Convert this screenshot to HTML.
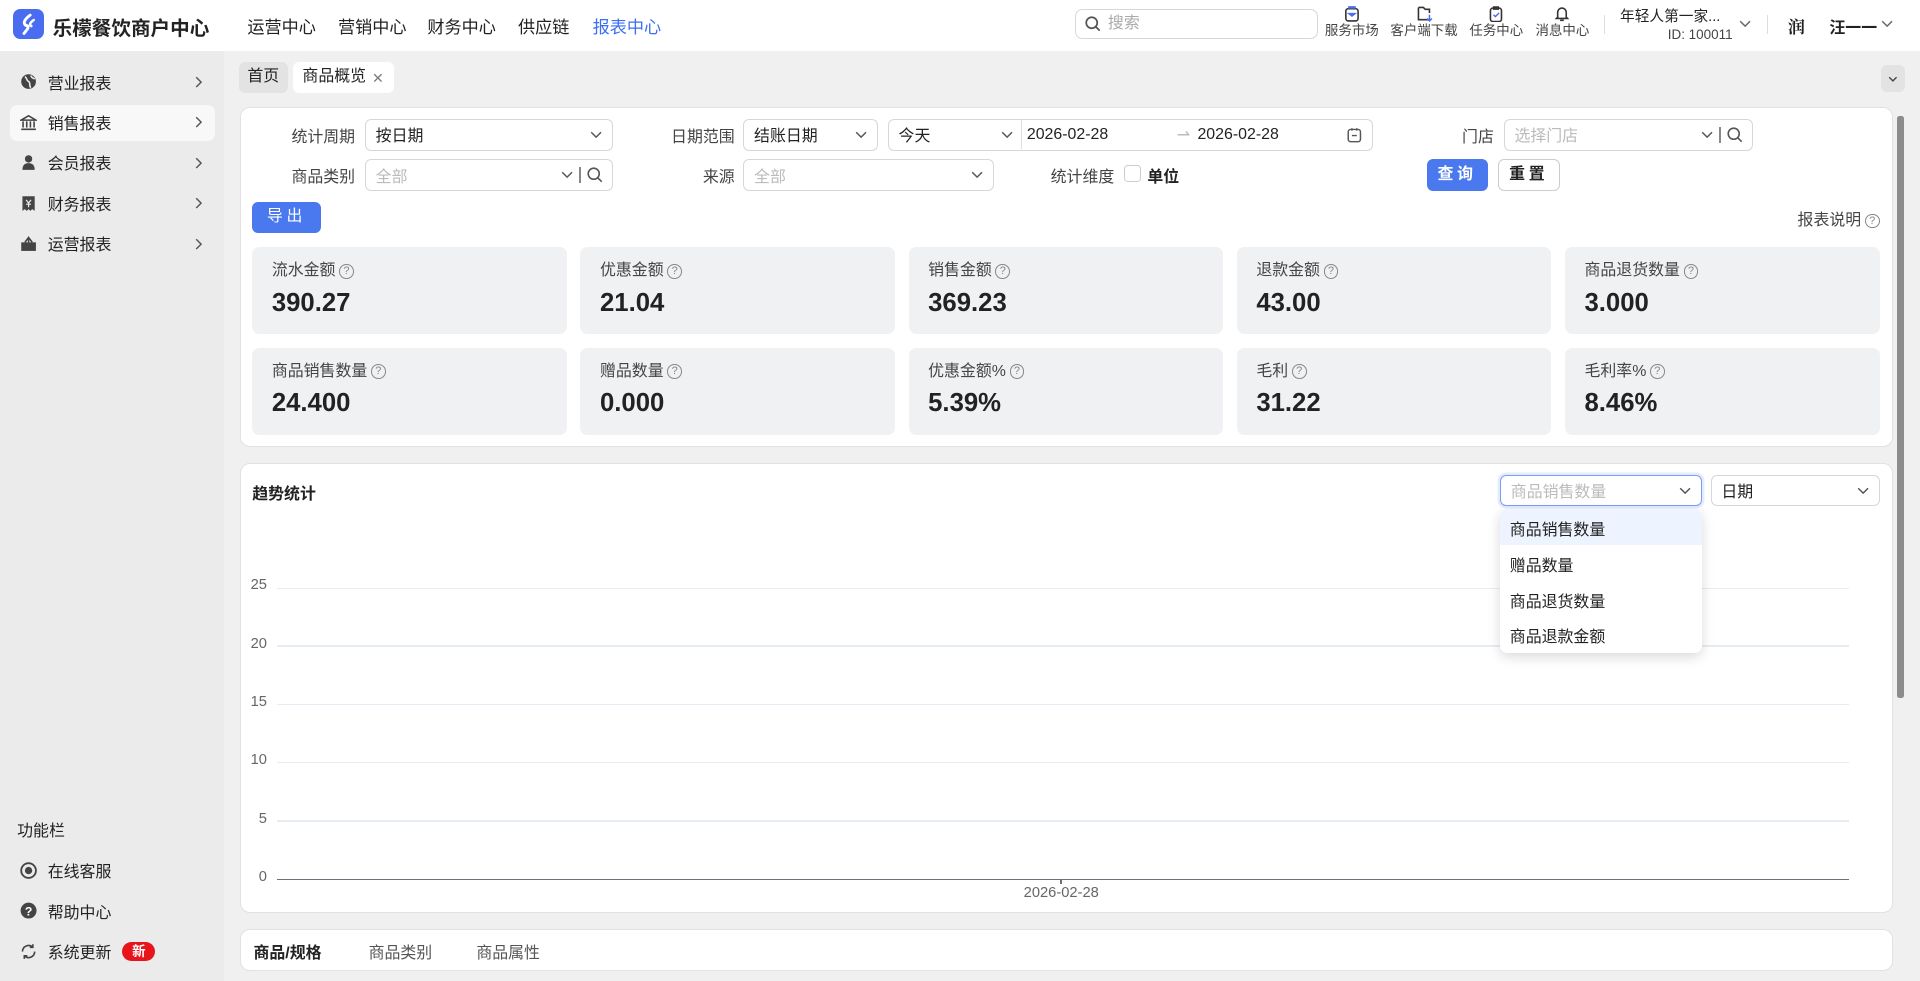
<!DOCTYPE html>
<html><head><meta charset="utf-8">
<style>
html{zoom:1.22449}
*{box-sizing:border-box;margin:0;padding:0}
body{width:1568px;height:801px;overflow:hidden;background:#f0f0f0;font-family:"Liberation Sans","Noto Sans CJK SC",sans-serif;font-size:13px;color:#222;position:relative}
.a{position:absolute}
.hdr{left:0;top:0;width:1568px;height:42px;background:#fff}
.nav{top:11px;font-size:14px;color:#222}
.side{left:0;top:42px;width:183px;height:759px;background:#ebebeb}
.si{left:16px;font-size:13px;color:#222;display:flex;align-items:center;gap:9px;height:18px}
.si svg{flex:none}
.chev{left:159px}
.panel{background:#fff;border:1px solid #e2e2e2;border-radius:8px}
.lbl{font-size:13px;color:#444;text-align:right}
.sel{height:26px;border:1px solid #d7d7d7;border-radius:5px;background:#fff;font-size:13px;padding:0 8px;display:flex;align-items:center}
.ph{color:#bbb}
.card{background:#f0f1f3;border-radius:6px;width:257px;height:71px}
.card .t{position:absolute;left:16px;top:8px;font-size:13px;color:#444}
.card .v{position:absolute;left:16px;top:34px;font-size:21px;font-weight:bold;color:#222}
.q{display:inline-block;width:12px;height:12px;border:1px solid #888;border-radius:50%;font-size:9px;line-height:10px;text-align:center;color:#888;vertical-align:1px;margin-left:3px}
.grid{left:226px;width:1284px;height:1px;background:#e6ecf4}
.yl{left:196px;width:22px;text-align:right;font-size:12px;color:#666}
.dd{font-size:13px;color:#222;left:1233px}
.hi{top:3px;font-size:11px;color:#444;text-align:center;line-height:14px}
</style></head><body>
<div class="a hdr"></div>
<div class="a" style="left:11px;top:7px;width:25px;height:25px;border-radius:6px;background:#4a6cf0"><svg width="25" height="25" viewBox="0 0 25 25"><path d="M14 5 C10 8 8 11 10 13 C11 14 13 13 12 16 L9 20" stroke="#fff" stroke-width="2.4" fill="none" stroke-linecap="round"/><path d="M17 9 C14 11 13 13 15 14" stroke="#fff" stroke-width="2" fill="none" stroke-linecap="round"/></svg></div>
<div class="a" style="left:43px;top:10px;font-size:16px;font-weight:bold">乐檬餐饮商户中心</div>
<div class="a nav" style="left:202px">运营中心</div>
<div class="a nav" style="left:276px">营销中心</div>
<div class="a nav" style="left:349px">财务中心</div>
<div class="a nav" style="left:423px">供应链</div>
<div class="a nav" style="left:484px;color:#3d6ef5">报表中心</div>
<div class="a" style="left:878px;top:7px;width:198px;height:25px;border:1px solid #d7d7d7;border-radius:6px;padding-left:26px;line-height:23px;color:#aaa;font-size:13px">搜索</div>
<svg class="a" style="left:886px;top:13px" width="13" height="13"><circle cx="5.5" cy="5.5" r="4.5" stroke="#555" stroke-width="1.4" fill="none"/><path d="M9 9l3 3" stroke="#555" stroke-width="1.4"/></svg>
<svg class="a" style="left:1098px;top:4px" width="13" height="14"><rect x="1.5" y="3" width="10" height="10" rx="2" stroke="#333" stroke-width="1.3" fill="none"/><path d="M4 3V1.5h5V3M4 7h5l-2.5 2z" stroke="#4a6cf0" stroke-width="1.2" fill="#4a6cf0"/></svg>
<svg class="a" style="left:1156px;top:4px" width="14" height="14"><path d="M2 2h4l1.5 1.5H11v3M11 12H2V2" stroke="#333" stroke-width="1.3" fill="none"/><path d="M11 8v5M9 11l2 2 2-2" stroke="#4a6cf0" stroke-width="1.2" fill="none"/></svg>
<svg class="a" style="left:1215px;top:4px" width="13" height="14"><rect x="2" y="2.5" width="9" height="11" rx="2" stroke="#333" stroke-width="1.3" fill="none"/><path d="M4.5 1.5h4v2h-4z" stroke="#333" fill="none"/><path d="M4.5 8l1.5 1.5 3-3" stroke="#4a6cf0" stroke-width="1.2" fill="none"/></svg>
<svg class="a" style="left:1269px;top:4px" width="13" height="14"><path d="M3 10V6a3.5 3.5 0 017 0v4l1 1H2z" stroke="#333" stroke-width="1.3" fill="none"/><path d="M5 12.5h3" stroke="#333" stroke-width="1.3"/></svg>
<div class="a hi" style="left:1082px;top:18px;width:44px">服务市场</div>
<div class="a hi" style="left:1135px;top:18px;width:56px">客户端下载</div>
<div class="a hi" style="left:1199px;top:18px;width:46px">任务中心</div>
<div class="a hi" style="left:1253px;top:18px;width:46px">消息中心</div>
<div class="a" style="left:1310px;top:12px;width:1px;height:16px;background:#ddd"></div>
<div class="a" style="left:1323px;top:4px;font-size:12px;color:#222">年轻人第一家...</div>
<div class="a" style="left:1362px;top:22px;font-size:11px;color:#444">ID: 100011</div>
<svg class="a" style="left:1420px;top:16px" width="10" height="6"><path d="M1 1l4 4 4-4" stroke="#666" fill="none" stroke-width="1.2"/></svg>
<div class="a" style="left:1443px;top:12px;width:1px;height:16px;background:#ddd"></div>
<div class="a" style="left:1460px;top:11px;width:22px;height:22px;font-size:14px;font-weight:bold;font-family:'Noto Serif CJK SC',serif">润</div>
<div class="a" style="left:1494px;top:12px;font-size:13px;font-weight:bold">汪一一</div>
<svg class="a" style="left:1536px;top:16px" width="10" height="6"><path d="M1 1l4 4 4-4" stroke="#666" fill="none" stroke-width="1.2"/></svg>

<div class="a side"></div>
<div class="a" style="left:8px;top:86px;width:168px;height:29px;background:#f8f8f8;border-radius:6px"></div>
<div class="a si" style="top:58px"><svg width="14" height="14"><circle cx="7" cy="7" r="6" fill="#444"/><path d="M4 3c2 1 1 3 3 4s0 4 2 5M9 2c0 2 2 2 3 3" stroke="#ebebeb" stroke-width="1.3" fill="none"/></svg>营业报表</div>
<div class="a si" style="top:91px"><svg width="14" height="14"><path d="M1 5l6-3.5L13 5zM2.5 6v5M5.5 6v5M8.5 6v5M11.5 6v5M1 12.5h12" stroke="#444" stroke-width="1.3" fill="none"/></svg>销售报表</div>
<div class="a si" style="top:124px"><svg width="14" height="14"><circle cx="7" cy="4" r="3" fill="#444"/><path d="M2 13c0-4 2-5.5 5-5.5s5 1.5 5 5.5z" fill="#444"/></svg>会员报表</div>
<div class="a si" style="top:157px"><svg width="14" height="14"><path d="M2 1h10v12l-2-1.5-1.5 1.5L7 11.5 5.5 13 4 11.5 2 13z" fill="#444"/><path d="M5 4l2 2.5L9 4M7 6.5V10M5 7.5h4" stroke="#ebebeb" stroke-width="1" fill="none"/></svg>财务报表</div>
<div class="a si" style="top:190px"><svg width="14" height="14"><path d="M1 6h12v7H1z" fill="#444"/><path d="M4 6l3-4 3 4M7 2v4" stroke="#444" stroke-width="1.3" fill="none"/></svg>运营报表</div>
<svg class="a chev" style="top:62px" width="6" height="10"><path d="M1 1l4 4-4 4" stroke="#555" fill="none" stroke-width="1.2"/></svg>
<svg class="a chev" style="top:95px" width="6" height="10"><path d="M1 1l4 4-4 4" stroke="#555" fill="none" stroke-width="1.2"/></svg>
<svg class="a chev" style="top:128px" width="6" height="10"><path d="M1 1l4 4-4 4" stroke="#555" fill="none" stroke-width="1.2"/></svg>
<svg class="a chev" style="top:161px" width="6" height="10"><path d="M1 1l4 4-4 4" stroke="#555" fill="none" stroke-width="1.2"/></svg>
<svg class="a chev" style="top:194px" width="6" height="10"><path d="M1 1l4 4-4 4" stroke="#555" fill="none" stroke-width="1.2"/></svg>
<div class="a" style="left:14px;top:668px;font-size:13px">功能栏</div>
<div class="a si" style="top:702px"><svg width="14" height="14"><circle cx="7" cy="7" r="6" stroke="#444" stroke-width="1.5" fill="none"/><circle cx="7" cy="7" r="3" fill="#444"/></svg>在线客服</div>
<div class="a si" style="top:735px"><svg width="14" height="14"><circle cx="7" cy="7" r="6.5" fill="#444"/><text x="7" y="11" font-size="10" font-weight="bold" fill="#fff" text-anchor="middle" font-family="Liberation Sans">?</text></svg>帮助中心</div>
<div class="a si" style="top:768px"><svg width="14" height="14"><path d="M2 7a5 5 0 018.5-3.5M12 7a5 5 0 01-8.5 3.5" stroke="#444" stroke-width="1.3" fill="none"/><path d="M10.5 1v2.5H8M3.5 13v-2.5H6" stroke="#444" stroke-width="1.3" fill="none"/></svg>系统更新 <span style="background:#e8141b;color:#fff;font-size:11px;font-weight:bold;border-radius:8px;padding:0 8px;line-height:16px">新</span></div>

<div class="a" style="left:195px;top:51px;width:40px;height:25px;background:#e3e3e3;border-radius:5px;text-align:center;line-height:25px">首页</div>
<div class="a" style="left:239px;top:51px;width:83px;height:25px;background:#fff;border-radius:5px;padding-left:8px;line-height:25px">商品概览</div>
<svg class="a" style="left:305px;top:60px" width="8" height="8"><path d="M1 1l6 6M7 1L1 7" stroke="#777" stroke-width="1.1"/></svg>
<div class="a" style="left:1536px;top:53px;width:20px;height:22px;background:#e3e3e3;border-radius:5px"></div>
<svg class="a" style="left:1542px;top:62px" width="8" height="5"><path d="M1 1l3 3 3-3" stroke="#444" fill="none" stroke-width="1.1"/></svg>

<div class="a panel" style="left:196px;top:87px;width:1350px;height:278px"></div>
<div class="a" style="left:1549px;top:95px;width:6px;height:475px;background:#8c8c8c;border-radius:2px"></div>
<div class="a lbl" style="left:220px;top:101px;width:70px">统计周期</div>
<div class="a sel" style="left:298px;top:97px;width:203px;justify-content:space-between">按日期<svg width="10" height="6"><path d="M1 1l4 4 4-4" stroke="#555" fill="none" stroke-width="1.2"/></svg></div>
<div class="a lbl" style="left:220px;top:134px;width:70px">商品类别</div>
<div class="a sel" style="left:298px;top:130px;width:203px;justify-content:space-between"><span class="ph">全部</span><span style="display:flex;align-items:center;gap:5px"><svg width="10" height="6"><path d="M1 1l4 4 4-4" stroke="#555" fill="none" stroke-width="1.2"/></svg><span style="width:1px;height:13px;background:#888"></span><svg width="13" height="13"><circle cx="5.5" cy="5.5" r="4.5" stroke="#555" stroke-width="1.3" fill="none"/><path d="M9 9l3 3" stroke="#555" stroke-width="1.3"/></svg></span></div>
<div class="a lbl" style="left:530px;top:101px;width:70px">日期范围</div>
<div class="a sel" style="left:607px;top:97px;width:110px;justify-content:space-between">结账日期<svg width="10" height="6"><path d="M1 1l4 4 4-4" stroke="#555" fill="none" stroke-width="1.2"/></svg></div>
<div class="a sel" style="left:725px;top:97px;width:396px"><span style="width:84px">今天</span><svg width="10" height="6" style="margin-right:6px"><path d="M1 1l4 4 4-4" stroke="#555" fill="none" stroke-width="1.2"/></svg><span style="border-left:1px solid #ddd;height:24px"></span><span style="margin-left:4px">2026-02-28</span><span style="color:#bbb;margin-left:56px">⇀</span><span style="margin-left:6px">2026-02-28</span><svg style="margin-left:auto" width="12" height="13"><rect x="1" y="2" width="10" height="10" rx="2" stroke="#555" stroke-width="1.2" fill="none"/><path d="M4 1v2M8 1v2M4 7h4" stroke="#555" stroke-width="1.2"/></svg></div>
<div class="a lbl" style="left:530px;top:134px;width:70px">来源</div>
<div class="a sel" style="left:607px;top:130px;width:205px;justify-content:space-between"><span class="ph">全部</span><svg width="10" height="6"><path d="M1 1l4 4 4-4" stroke="#555" fill="none" stroke-width="1.2"/></svg></div>
<div class="a lbl" style="left:840px;top:134px;width:70px">统计维度</div>
<div class="a" style="left:918px;top:135px;width:14px;height:14px;border:1px solid #ccc;border-radius:3px"></div>
<div class="a" style="left:937px;top:134px;font-weight:bold">单位</div>
<div class="a lbl" style="left:1150px;top:101px;width:70px">门店</div>
<div class="a sel" style="left:1228px;top:97px;width:204px;justify-content:space-between"><span class="ph">选择门店</span><span style="display:flex;align-items:center;gap:5px"><svg width="10" height="6"><path d="M1 1l4 4 4-4" stroke="#555" fill="none" stroke-width="1.2"/></svg><span style="width:1px;height:13px;background:#888"></span><svg width="13" height="13"><circle cx="5.5" cy="5.5" r="4.5" stroke="#555" stroke-width="1.3" fill="none"/><path d="M9 9l3 3" stroke="#555" stroke-width="1.3"/></svg></span></div>
<div class="a" style="left:1165px;top:130px;width:50px;height:26px;background:#4a78ee;border-radius:5px;color:#fff;text-align:center;line-height:26px;font-weight:bold;letter-spacing:3px">查询</div>
<div class="a" style="left:1223px;top:130px;width:51px;height:26px;border:1px solid #ccc;border-radius:5px;text-align:center;line-height:24px;font-weight:bold;letter-spacing:3px">重置</div>
<div class="a" style="left:206px;top:165px;width:56px;height:25px;background:#4a78ee;border-radius:5px;color:#fff;text-align:center;line-height:25px;letter-spacing:3px">导出</div>
<div class="a" style="left:1468px;top:169px;color:#444">报表说明<span class="q">?</span></div>

<div class="a card" style="left:206px;top:202px"><div class="t">流水金额<span class="q">?</span></div><div class="v">390.27</div></div>
<div class="a card" style="left:474px;top:202px"><div class="t">优惠金额<span class="q">?</span></div><div class="v">21.04</div></div>
<div class="a card" style="left:742px;top:202px"><div class="t">销售金额<span class="q">?</span></div><div class="v">369.23</div></div>
<div class="a card" style="left:1010px;top:202px"><div class="t">退款金额<span class="q">?</span></div><div class="v">43.00</div></div>
<div class="a card" style="left:1278px;top:202px"><div class="t">商品退货数量<span class="q">?</span></div><div class="v">3.000</div></div>
<div class="a card" style="left:206px;top:284px"><div class="t">商品销售数量<span class="q">?</span></div><div class="v">24.400</div></div>
<div class="a card" style="left:474px;top:284px"><div class="t">赠品数量<span class="q">?</span></div><div class="v">0.000</div></div>
<div class="a card" style="left:742px;top:284px"><div class="t">优惠金额%<span class="q">?</span></div><div class="v">5.39%</div></div>
<div class="a card" style="left:1010px;top:284px"><div class="t">毛利<span class="q">?</span></div><div class="v">31.22</div></div>
<div class="a card" style="left:1278px;top:284px"><div class="t">毛利率%<span class="q">?</span></div><div class="v">8.46%</div></div>

<div class="a panel" style="left:196px;top:378px;width:1350px;height:368px"></div>
<div class="a" style="left:206px;top:393px;font-weight:bold">趋势统计</div>
<div class="a grid" style="top:480px"></div><div class="a yl" style="top:471px">25</div>
<div class="a grid" style="top:527px"></div><div class="a yl" style="top:519px">20</div>
<div class="a grid" style="top:575px"></div><div class="a yl" style="top:567px">15</div>
<div class="a grid" style="top:622px"></div><div class="a yl" style="top:614px">10</div>
<div class="a grid" style="top:670px"></div><div class="a yl" style="top:662px">5</div>
<div class="a" style="left:226px;top:718px;width:1284px;height:1px;background:#6e7079"></div><div class="a yl" style="top:710px">0</div>
<div class="a" style="left:866px;top:718px;width:1px;height:4px;background:#6e7079"></div>
<div class="a" style="left:836px;top:723px;font-size:12px;color:#666">2026-02-28</div>
<div class="a sel" style="left:1225px;top:388px;width:165px;height:25px;border-color:#7d9cf5;box-shadow:0 0 0 2px #e4ebfd;justify-content:space-between"><span class="ph">商品销售数量</span><svg width="10" height="6"><path d="M1 1l4 4 4-4" stroke="#555" fill="none" stroke-width="1.2"/></svg></div>
<div class="a sel" style="left:1397px;top:388px;width:138px;height:25px;justify-content:space-between">日期<svg width="10" height="6"><path d="M1 1l4 4 4-4" stroke="#555" fill="none" stroke-width="1.2"/></svg></div>
<div class="a" style="left:1225px;top:416px;width:165px;height:117px;background:#fff;border-radius:6px;box-shadow:0 3px 10px rgba(0,0,0,.15)"></div>
<div class="a" style="left:1225px;top:416px;width:165px;height:29px;background:#eef4ff;border-radius:6px 6px 0 0"></div>
<div class="a dd" style="top:422px">商品销售数量</div>
<div class="a dd" style="top:452px">赠品数量</div>
<div class="a dd" style="top:481px">商品退货数量</div>
<div class="a dd" style="top:510px">商品退款金额</div>

<div class="a panel" style="left:196px;top:759px;width:1350px;height:34px"></div>
<div class="a" style="left:207px;top:768px;font-weight:bold">商品/规格</div>
<div class="a" style="left:301px;top:768px;color:#555">商品类别</div>
<div class="a" style="left:389px;top:768px;color:#555">商品属性</div>
</body></html>
